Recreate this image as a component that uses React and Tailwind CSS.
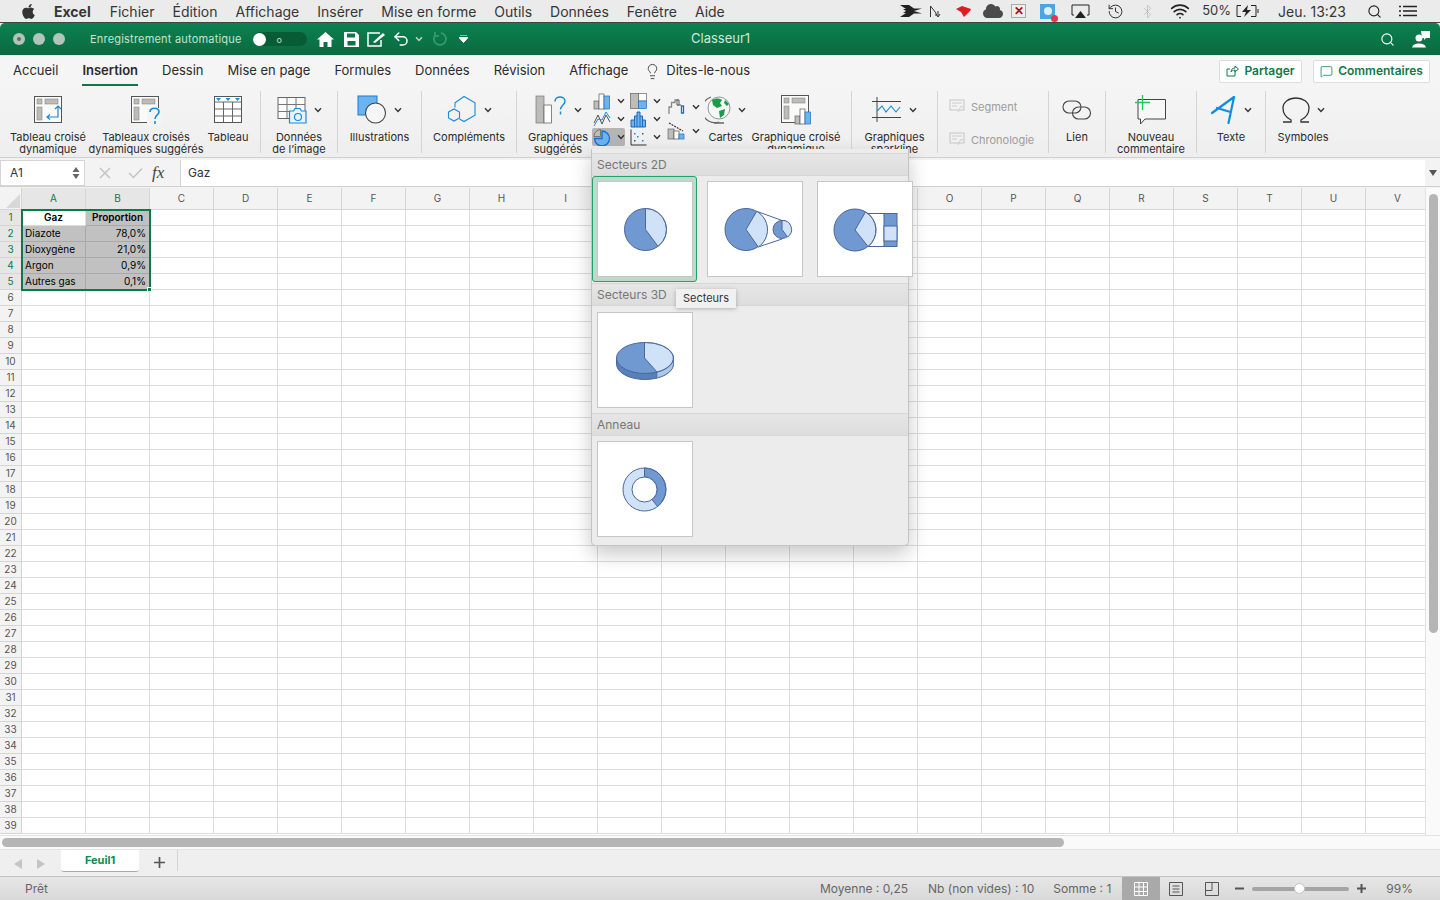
import React from 'react';
import { FaApple, FaCloud } from 'react-icons/fa';
import { Search, Undo2, Lightbulb, MessageSquare, Bluetooth, History, Wifi } from 'lucide-react';

const COLS = 'ABCDEFGHIJKLMNOPQRSTUV'.split('');
const ROWS = Array.from({ length: 39 }, (_, i) => i + 1);
const MENUS = ['Fichier', 'Édition', 'Affichage', 'Insérer', 'Mise en forme', 'Outils', 'Données', 'Fenêtre', 'Aide'];
const TABS = ['Accueil', 'Insertion', 'Dessin', 'Mise en page', 'Formules', 'Données', 'Révision', 'Affichage'];

const DATA = [
  ['Gaz', 'Proportion'],
  ['Diazote', '78,0%'],
  ['Dioxygène', '21,0%'],
  ['Argon', '0,9%'],
  ['Autres gas', '0,1%'],
];

const DARK = '#7098d1';
const LIGHT = '#cfe2f8';
const EDGE = '#4b6699';

const Chev = ({ className = '' }) => (
  <svg width="8" height="6" viewBox="0 0 8 6" className={`shrink-0 ${className}`}>
    <path d="M1 1.2 L4 4.4 L7 1.2" fill="none" stroke="#333" strokeWidth="1.4" />
  </svg>
);

const Sep = () => <div className="w-px h-[62px] mt-[2px] bg-[#d4d4d4] shrink-0" />;

// ── Ribbon icons ──────────────────────────────
const PivotIcon = () => (
  <svg width="30" height="30" viewBox="0 0 30 30">
    <rect x="1.5" y="1.5" width="27" height="26" fill="#fafafa" stroke="#555" />
    <rect x="4" y="4" width="5" height="5" fill="#bcbcb8" stroke="#777" strokeWidth=".5" />
    <rect x="12" y="4" width="13" height="5" fill="#bcbcb8" stroke="#777" strokeWidth=".5" />
    <rect x="4" y="12" width="5" height="13" fill="#bcbcb8" stroke="#777" strokeWidth=".5" />
    <path d="M25 12 v10 h-10 M22 14 l3-3 3 3 M17 19.500 l-3 2.500 3 2.500" fill="none" stroke="#1b8ad8" strokeWidth="1.200" />
  </svg>
);

const SuggestIcon = () => (
  <svg width="32" height="30" viewBox="0 0 32 30">
    <rect x="1.500" y="1.500" width="27" height="26" fill="#fafafa" stroke="#555" />
    <rect x="4" y="4" width="5" height="5" fill="#bcbcb8" stroke="#777" strokeWidth=".5" />
    <rect x="12" y="4" width="13" height="5" fill="#bcbcb8" stroke="#777" strokeWidth=".5" />
    <rect x="4" y="12" width="5" height="13" fill="#bcbcb8" stroke="#777" strokeWidth=".5" />
    <rect x="17" y="13" width="14" height="17" fill="#f4f4f4" />
    <path d="M20 17 c0-5 9-5 9 0 c0 3-4 3-4 7 M25 26 v3" fill="none" stroke="#1b8ad8" strokeWidth="1.600" />
  </svg>
);

const TableIcon = () => (
  <svg width="30" height="30" viewBox="0 0 30 30">
    <rect x="1.500" y="1.500" width="27" height="26" fill="#fff" stroke="#555" />
    <path d="M1.500 7 H28.500 M1.500 14 H28.500 M1.500 21 H28.500 M10.500 7 V27 M19.500 7 V27" stroke="#666" fill="none" />
    <path d="M3 3 h5 l-2.500 3z M12.500 3 h5 l-2.500 3z M22 3 h5 l-2.500 3z" fill="#1b8ad8" />
  </svg>
);

const PictureDataIcon = () => (
  <svg width="30" height="28" viewBox="0 0 30 28">
    <rect x="1" y="1.500" width="27" height="21" fill="#fbfbfb" stroke="#666" />
    <path d="M1 8.500 H28 M1 15.500 H28 M10 1.500 V22.500 M19 1.500 V22.500" stroke="#777" fill="none" />
    <path d="M12.500 15 h4 l1.500-2.500 h5 l1.500 2.500 h4.500 v12 h-16.500z" fill="#e8f3fb" stroke="#1b8ad8" strokeWidth="1.200" />
    <circle cx="21" cy="21" r="3.500" fill="none" stroke="#1b8ad8" strokeWidth="1.200" />
  </svg>
);

const ShapesIcon = () => (
  <svg width="30" height="30" viewBox="0 0 30 30">
    <rect x="1" y="1" width="19" height="19" fill="#6db3f0" stroke="#1b7ad0" />
    <circle cx="18.500" cy="18" r="10" fill="#f6f6f6" stroke="#444" strokeWidth="1.100" />
  </svg>
);

const AddinIcon = () => (
  <svg width="30" height="30" viewBox="0 0 30 30">
    <path d="M16.500 1.500 L27.500 7.800 V20 L16.500 26.500 L9.500 22.300 V14 L5 11.500 V7.800z" fill="none" />
    <path d="M8 12.500 V7.700 L17 1.500 L28 7.700 V20.300 L17 26.500 L12.500 24" fill="none" stroke="#1b8ad8" strokeWidth="1.100" />
    <path d="M1.500 17 L7 14 L12.500 17 V23 L7 26 L1.500 23z" fill="none" stroke="#1b8ad8" strokeWidth="1.100" />
  </svg>
);

const ChartSuggestIcon = () => (
  <svg width="32" height="30" viewBox="0 0 32 30">
    <rect x="1" y="1" width="8" height="27" fill="#bcbcb8" stroke="#777" strokeWidth=".7" />
    <rect x="9" y="10" width="7.500" height="18" fill="#fff" stroke="#555" strokeWidth=".7" />
    <path d="M20 6.500 c0-6 10-6 10 0 c0 3.500-4.500 3.500-4.500 8 M25.500 16.500 v3" fill="none" stroke="#1b8ad8" strokeWidth="1.500" />
  </svg>
);

const MiniBars = () => (
  <svg width="18" height="17" viewBox="0 0 18 17">
    <rect x="1" y="8" width="5" height="8" fill="#bcbcb8" stroke="#666" strokeWidth=".7" />
    <rect x="6" y="1" width="5" height="15" fill="#fff" stroke="#555" strokeWidth=".7" />
    <rect x="11" y="3" width="5.500" height="13" fill="#6db3f0" stroke="#1b6fc0" strokeWidth=".7" />
  </svg>
);

const MiniLines = () => (
  <svg width="18" height="17" viewBox="0 0 18 17">
    <path d="M1 12 L5 4 L9 13 L13 4 L17 11" fill="none" stroke="#555" strokeWidth="1" />
    <path d="M1 15 L5 8 L9 9 L13 1 L17 7" fill="none" stroke="#1b8ad8" strokeWidth="1" />
  </svg>
);

const MiniPie = () => (
  <svg width="18" height="18" viewBox="0 0 18 18">
    <path d="M7.500 1.500 A7 7 0 0 0 1 8.500 H7.500z" fill="#bcbcb8" stroke="#666" strokeWidth=".8" />
    <path d="M9 3 A7.500 7.500 0 1 1 1.500 10.500 H9z" fill="#6db3f0" stroke="#0f73d0" strokeWidth="1.300" />
  </svg>
);

const MiniTreemap = () => (
  <svg width="17" height="17" viewBox="0 0 17 17">
    <rect x=".5" y=".5" width="8" height="15" fill="#bcbcb8" stroke="#666" strokeWidth=".7" />
    <rect x="8.500" y=".5" width="8" height="7.500" fill="#fff" stroke="#666" strokeWidth=".7" />
    <rect x="8.500" y="8" width="8" height="7.500" fill="#6db3f0" stroke="#1b6fc0" strokeWidth=".7" />
  </svg>
);

const MiniHisto = () => (
  <svg width="17" height="17" viewBox="0 0 17 17">
    <path d="M1 16 V9 H4.500 V5 H7 V1 H10 V5 H12.500 V9 H15.500 V16z" fill="#6db3f0" stroke="#0f5fb0" strokeWidth=".9" />
    <path d="M4.500 9 V16 M7 5 V16 M10 5 V16 M12.500 9 V16" stroke="#0f5fb0" strokeWidth=".8" />
  </svg>
);

const MiniScatter = () => (
  <svg width="17" height="17" viewBox="0 0 17 17">
    <path d="M1 .5 V16 H16.500" fill="none" stroke="#333" />
    <g fill="#555"><rect x="4" y="11" width="1.500" height="1.500" /><rect x="12" y="4" width="1.500" height="1.500" /></g>
    <g fill="#1b8ad8"><rect x="4" y="4" width="1.500" height="1.500" /><rect x="7" y="7" width="1.500" height="1.500" /><rect x="12" y="11" width="1.500" height="1.500" /></g>
  </svg>
);

const MiniWaterfall = () => (
  <svg width="17" height="17" viewBox="0 0 17 17">
    <path d="M1 15 V8 H3.500 V3.500 H7 V1 H10 V6 H13" fill="none" stroke="#888" strokeWidth="1.300" />
    <path d="M13.500 7 H15.500 V14 H13.500z" fill="#fff" stroke="#1b6fc0" strokeWidth="1.300" />
    <path d="M9 1 V6 H11 V1z" fill="#fff" stroke="#555" strokeWidth="1" />
  </svg>
);

const MiniFunnel = () => (
  <svg width="18" height="18" viewBox="0 0 18 18">
    <rect x="1" y="7" width="6" height="10" fill="#bcbcb8" stroke="#666" strokeWidth=".7" />
    <rect x="7" y="9" width="5" height="8" fill="#fff" stroke="#555" strokeWidth=".7" />
    <rect x="12" y="12" width="5" height="5" fill="#6db3f0" stroke="#1b6fc0" strokeWidth=".7" />
    <path d="M2 1 L16 9" stroke="#333" strokeWidth="1.300" strokeDasharray="2 1" />
  </svg>
);

const GlobeIcon = () => (
  <svg width="26" height="30" viewBox="0 0 26 30">
    <path d="M6 2 A13 13 0 0 0 14 27" fill="none" stroke="#666" strokeWidth="1.200" />
    <path d="M9 28 H19" stroke="#666" strokeWidth="1.500" />
    <circle cx="14" cy="13" r="11" fill="#f4f9f6" stroke="#555" strokeWidth=".6" />
    <path d="M7 5 C10 3 15 3 17 5 L15 8 L17 11 L12 13 L8 10z M14 16 L20 14 L19 20 L15 23z M20 5 L24 9 L22 11 L19 8z" fill="#1d9b4c" />
  </svg>
);

const PivotChartIcon = () => (
  <svg width="32" height="32" viewBox="0 0 32 32">
    <rect x="1.500" y="1.500" width="27" height="27" fill="#fafafa" stroke="#555" />
    <rect x="4" y="4" width="5" height="5" fill="#bcbcb8" stroke="#777" strokeWidth=".5" />
    <rect x="12" y="4" width="13" height="5" fill="#bcbcb8" stroke="#777" strokeWidth=".5" />
    <rect x="4" y="12" width="5" height="13" fill="#bcbcb8" stroke="#777" strokeWidth=".5" />
    <rect x="15" y="22" width="5" height="8" fill="#bcbcb8" stroke="#666" strokeWidth=".7" />
    <rect x="20" y="15" width="5" height="15" fill="#fff" stroke="#555" strokeWidth=".7" />
    <rect x="25" y="18" width="5.500" height="12" fill="#6db3f0" stroke="#1b6fc0" strokeWidth=".7" />
  </svg>
);

const SparkIcon = () => (
  <svg width="30" height="26" viewBox="0 0 30 26">
    <path d="M5 0 V25 M0 4.500 H29 M0 20.500 H29" stroke="#444" fill="none" />
    <path d="M5 14 L10 9 L14 15 L19 9 L24 15 L28 10" stroke="#1b8ad8" fill="none" strokeWidth="1.100" />
  </svg>
);

const SlicerIcon = () => (
  <svg width="16" height="16" viewBox="0 0 16 16" className="opacity-50">
    <rect x="1" y="1" width="14" height="10" fill="#f4f4f4" stroke="#999" />
    <path d="M3 4 H13 M3 7 H8 M9 13 l3-6 3 2" fill="none" stroke="#aaa" />
  </svg>
);

const LinkIcon = () => (
  <svg width="30" height="24" viewBox="0 0 30 24">
    <rect x="1" y="3" width="18" height="12" rx="6" fill="none" stroke="#444" strokeWidth="1.100" />
    <rect x="10.500" y="9" width="18" height="12" rx="6" fill="none" stroke="#444" strokeWidth="1.100" />
  </svg>
);

const CommentIcon = () => (
  <svg width="32" height="30" viewBox="0 0 32 30">
    <path d="M3 4.500 H30.500 V24 H10 L5.500 29 V24 H3z" fill="#f7f7f7" stroke="#444" strokeWidth="1" />
    <path d="M0 7.500 H15 M7.500 0 V15" stroke="#22c55e" strokeWidth="1.300" />
  </svg>
);

const TextIcon = () => (
  <svg width="26" height="28" viewBox="0 0 26 28">
    <path d="M1 17 L23 1 L17.500 27 M6 12 L19.500 16" fill="none" stroke="#0f8ee0" strokeWidth="2.200" strokeLinecap="round" strokeLinejoin="round" />
  </svg>
);

const OmegaIcon = () => (
  <svg width="28" height="26" viewBox="0 0 28 26">
    <path d="M1 25 H9 V23 C3 20 1 15 1 11 C1 5 7 1 14 1 C21 1 27 5 27 11 C27 15 25 20 19 23 V25 H27" fill="none" stroke="#333" strokeWidth="1.300" />
  </svg>
);

const RibbonItem = ({ width, icon, chevron, lines, pad = '' }) => (
  <div className={`shrink-0 flex flex-col items-center ${width} ${pad}`}>
    <div className="h-[38px] flex items-center justify-center gap-[7px] mt-[2px]">
      {icon}
      {chevron && <Chev />}
    </div>
    <div className="mt-[2px] text-center text-[11px] leading-[12px] text-[#2b2b2b] whitespace-nowrap">
      {lines.map(l => <div key={l}>{l}</div>)}
    </div>
  </div>
);

const MiniCell = ({ icon, width, active }) => (
  <div className={`flex items-center h-[18px] rounded-[2px] pl-[1px] ${width} ${active ? 'bg-[#b5b5b5]' : ''}`}>
    <div className="w-[20px] flex justify-center">{icon}</div>
    <Chev className="ml-[6px]" />
  </div>
);

// ── Top bars ──────────────────────────────────
const MenuBar = () => (
  <div className="h-[22px] bg-[#ebebeb] flex items-center text-[14px] text-[#363636] shrink-0">
    <FaApple className="ml-[20px] text-[17px] text-[#333]" />
    <span className="ml-[17px] font-bold">Excel</span>
    <div className="ml-[19px] flex gap-[18px]">
      {MENUS.map(m => <span key={m}>{m}</span>)}
    </div>
    <div className="ml-auto flex items-center h-full">
      <svg width="22" height="12" viewBox="0 0 22 12" className="mr-[7px]">
        <path d="M0 0 H9 L14 3.500 H22 L14 6 L22 8.500 H14 L9 12 H0 L6 8 H3 L6 6 L3 4 H6z" fill="#222" />
      </svg>
      <svg width="13" height="15" viewBox="0 0 13 15" className="mr-[14px]">
        <path d="M1.500 2 V13 M1.500 2 L7 9 V12 M9 7 V12 M11 10 l-2 3 -2-3" stroke="#333" fill="none" />
      </svg>
      <svg width="16" height="13" viewBox="0 0 16 13" className="mr-[11px]">
        <path d="M0 4 L6 1 L15 4 L14 6 L8 12 L5 7z" fill="#e01b24" />
      </svg>
      <FaCloud className="text-[20px] text-[#4a4a4a] mr-[8px]" />
      <div className="w-[15px] h-[14px] border border-[#aaa] bg-[#eee] flex items-center justify-center text-[12px] leading-none font-bold text-[#a11] mr-[14px]">✕</div>
      <div className="relative w-[15px] h-[15px] bg-[#4aa5e0] mr-[16px] flex items-center justify-center">
        <div className="w-[8px] h-[8px] rounded-full bg-[#dfeffa]" />
        <div className="absolute -right-[3px] -bottom-[3px] w-[7px] h-[7px] rounded-full bg-[#e0384c]" />
      </div>
      <svg width="19" height="15" viewBox="0 0 19 15" className="mr-[17px]">
        <path d="M3 11 H1 V1 H18 V11 H16" fill="none" stroke="#222" />
        <path d="M9.500 7 L15 14 H4z" fill="#222" />
      </svg>
      <History size={17} strokeWidth={1.400} className="text-[#333] mr-[16px]" />
      <Bluetooth size={15} strokeWidth={1.300} className="text-[#bbb] mr-[15px]" />
      <Wifi size={20} strokeWidth={2} className="text-[#222] mr-[12px]" />
      <span className="text-[13px]">50%</span>
      <svg width="24" height="12" viewBox="0 0 24 12" className="ml-[5px]">
        <path d="M5 .5 H1 V11.500 H5 M15 .5 H20 V11.500 H15 M22 4 V8" fill="none" stroke="#222" />
        <path d="M12 0 L6 7 H10 L8 12 L15 5 H11z" fill="#222" />
      </svg>
      <span className="ml-[18px]">Jeu. 13:23</span>
      <Search size={15} strokeWidth={1.800} className="ml-[21px] text-[#222]" />
      <svg width="18" height="12" viewBox="0 0 18 12" className="ml-[17px] mr-[23px]">
        <path d="M4 1.500 H18 M4 6 H18 M4 10.500 H18 M0 1.500 H2 M0 6 H2 M0 10.500 H2" stroke="#222" strokeWidth="1.400" />
      </svg>
    </div>
  </div>
);

const TitleBar = () => (
  <div className="shrink-0 border-t border-[#444] bg-[#ebebeb]">
    <div className="relative h-[32px] rounded-t-[5px] bg-gradient-to-b from-[#0b8150] to-[#0a6b3f] flex items-center">
      <div className="ml-[13px] flex gap-[8px]">
        {[0, 1, 2].map(i => (
          <div key={i} className="w-[12px] h-[12px] rounded-full bg-[#b4c4bc] flex items-center justify-center">
            {i === 0 && <div className="w-[4px] h-[4px] rounded-full bg-[#5d6f66]" />}
          </div>
        ))}
      </div>
      <span className="ml-[25px] text-[11px] tracking-[.2px] text-[#c3e2d2]">Enregistrement automatique</span>
      <div className="ml-[11px] w-[54px] h-[14px] rounded-full bg-[#075c36] flex items-center">
        <div className="w-[13px] h-[13px] rounded-full bg-white" />
        <span className="ml-[11px] text-[9px] leading-none text-[#c3e2d2]">o</span>
      </div>
      <svg width="17" height="15" viewBox="0 0 17 15" className="ml-[10px]">
        <path d="M8.500 0 L0 7.500 H2.500 V15 H6.500 V10 H10.500 V15 H14.500 V7.500 H17z" fill="#fff" />
      </svg>
      <svg width="15" height="15" viewBox="0 0 15 15" className="ml-[10px]">
        <path d="M0 0 H12 L15 3 V15 H0z M3 1.500 V5.500 H11 V1.500z M3.500 9 V13.500 H11.500 V9z" fill="#fff" fillRule="evenodd" />
      </svg>
      <svg width="19" height="15" viewBox="0 0 19 15" className="ml-[8px]">
        <path d="M13 1 H1 V14 H14 V8" fill="none" stroke="#fff" strokeWidth="1.500" />
        <path d="M6 10 L16 1 L18 3 L8 11z" fill="#fff" />
      </svg>
      <Undo2 size={18} strokeWidth={2} className="ml-[6px] text-white" />
      <Chev className="ml-[5px] invert" />
      <svg width="15" height="16" viewBox="0 0 15 16" className="ml-[9px]">
        <path d="M9 2 A6 6 0 1 1 3 4.500 M3 1 V5 H7" fill="none" stroke="#3f9c72" strokeWidth="1.600" />
      </svg>
      <svg width="9" height="8" viewBox="0 0 9 8" className="ml-[12px]">
        <path d="M1 0 H8 M0 2.500 H9 L4.500 7.500z" stroke="#fff" fill="#fff" />
      </svg>
      <span className="absolute left-[691px] text-[13px] text-[#cfe8db]">Classeur1</span>
      <div className="ml-auto flex items-center">
        <Search size={15} strokeWidth={1.800} className="text-white mr-[17px]" />
        <svg width="18" height="17" viewBox="0 0 18 17" className="mr-[10px]">
          <circle cx="7" cy="7" r="3.500" fill="#fff" />
          <path d="M0 16.500 C1 11 13 11 14 16.500z" fill="#fff" />
          <path d="M9 0 H18 V7 H14 L12 9 V7 H10z" fill="#fff" />
        </svg>
      </div>
    </div>
  </div>
);

const TabBar = () => (
  <div className="h-[32px] bg-[#f5f5f5] flex items-center shrink-0 text-[13px] text-[#2b2b2b]">
    <div className="ml-[13px] flex gap-[24px]">
      {TABS.map(t => (
        <div key={t} className={`relative ${t === 'Insertion' ? 'font-semibold' : ''}`}>
          {t}
          {t === 'Insertion' && <div className="absolute left-0 right-0 top-[23px] h-[2px] bg-[#0a7a4a]" />}
        </div>
      ))}
    </div>
    <Lightbulb size={17} strokeWidth={1.200} className="ml-[16px] text-[#333]" />
    <span className="ml-[5px]">Dites-le-nous</span>
    <div className="ml-auto flex gap-[11px] mr-[10px] text-[#0d7a4c] font-semibold text-[12px]">
      <div className="w-[83px] h-[23px] bg-white border border-[#ddd] rounded-[2px] flex items-center justify-center gap-[5px]">
        <svg width="13" height="12" viewBox="0 0 13 12">
          <path d="M9 5.500 V11 H1 V4 H4 M5 7 C5 4 7 3 9 3 V1 L12.500 4 L9 7 V5 C7 5 6 6 5 7z" fill="none" stroke="#0d7a4c" />
        </svg>
        Partager
      </div>
      <div className="w-[117px] h-[23px] bg-white border border-[#ddd] rounded-[2px] flex items-center justify-center gap-[5px]">
        <MessageSquare size={13} strokeWidth={1.400} />
        Commentaires
      </div>
    </div>
  </div>
);

const Ribbon = () => (
  <div className="h-[71px] bg-gradient-to-b from-[#f5f5f5] to-[#eeeeee] border-b border-[#cfcfcf] flex shrink-0 pt-[2px]">
    <RibbonItem width="w-[96px]" icon={<PivotIcon />} lines={['Tableau croisé', 'dynamique']} />
    <RibbonItem width="w-[100px]" icon={<SuggestIcon />} lines={['Tableaux croisés', 'dynamiques suggérés']} />
    <RibbonItem width="w-[64px]" icon={<TableIcon />} lines={['Tableau']} />
    <Sep />
    <RibbonItem width="w-[76px]" icon={<PictureDataIcon />} chevron lines={['Données', 'de l’image']} />
    <Sep />
    <RibbonItem width="w-[83px]" icon={<ShapesIcon />} chevron lines={['Illustrations']} />
    <Sep />
    <RibbonItem width="w-[94px]" icon={<AddinIcon />} chevron lines={['Compléments']} />
    <Sep />
    <RibbonItem width="w-[75px]" pad="pl-[7px]" icon={<ChartSuggestIcon />} chevron lines={['Graphiques', 'suggérés']} />
    <div className="w-[108px] shrink-0 grid grid-cols-[36px_37px_35px] grid-rows-[18px_18px_18px] mt-[3px]">
      <MiniCell icon={<MiniBars />} width="w-[33px]" />
      <MiniCell icon={<MiniTreemap />} width="w-[33px]" />
      <div className="row-span-3 flex flex-col justify-center gap-[6px] pl-[1px]">
        <div className="flex items-center"><div className="w-[20px] flex justify-center"><MiniWaterfall /></div><Chev className="ml-[6px]" /></div>
        <div className="flex items-center"><div className="w-[20px] flex justify-center"><MiniFunnel /></div><Chev className="ml-[6px]" /></div>
      </div>
      <MiniCell icon={<MiniLines />} width="w-[33px]" />
      <MiniCell icon={<MiniHisto />} width="w-[33px]" />
      <MiniCell icon={<MiniPie />} width="w-[33px]" active />
      <MiniCell icon={<MiniScatter />} width="w-[33px]" />
    </div>
    <RibbonItem width="w-[51px]" icon={<GlobeIcon />} chevron lines={['Cartes']} />
    <RibbonItem width="w-[90px]" icon={<PivotChartIcon />} lines={['Graphique croisé', 'dynamique']} />
    <div className="w-[10px] shrink-0" />
    <Sep />
    <RibbonItem width="w-[85px]" icon={<SparkIcon />} chevron lines={['Graphiques', 'sparkline']} />
    <Sep />
    <div className="w-[110px] shrink-0 text-[11px] text-[#9c9c9c] flex flex-col gap-[16px] pl-[11px] pt-[10px]">
      <div className="flex items-center gap-[6px]"><SlicerIcon />Segment</div>
      <div className="flex items-center gap-[6px]"><SlicerIcon />Chronologie</div>
    </div>
    <Sep />
    <RibbonItem width="w-[56px]" icon={<LinkIcon />} lines={['Lien']} />
    <Sep />
    <RibbonItem width="w-[90px]" icon={<CommentIcon />} lines={['Nouveau', 'commentaire']} />
    <Sep />
    <RibbonItem width="w-[68px]" icon={<TextIcon />} chevron lines={['Texte']} />
    <Sep />
    <RibbonItem width="w-[74px]" icon={<OmegaIcon />} chevron lines={['Symboles']} />
  </div>
);

const FormulaBar = () => (
  <div className="h-[29px] bg-[#f3f3f3] flex items-stretch shrink-0 border-b border-[#d0d0d0] pt-[2px]">
    <div className="w-[85px] bg-white border border-[#d5d5d5] flex items-center pl-[9px] text-[12px] text-[#333] relative">
      A1
      <svg width="8" height="14" viewBox="0 0 8 14" className="absolute right-[4px]">
        <path d="M4 1 L7.500 6 H.5z M4 13 L7.500 8 H.5z" fill="#666" />
      </svg>
    </div>
    <div className="w-[95px] flex items-center text-[#c4c4c4]">
      <svg width="12" height="12" viewBox="0 0 12 12" className="ml-[14px]"><path d="M1 1 L11 11 M11 1 L1 11" stroke="#c4c4c4" strokeWidth="1.500" /></svg>
      <svg width="15" height="12" viewBox="0 0 15 12" className="ml-[17px]"><path d="M1 6 L5.500 10.500 L14 1.500" fill="none" stroke="#c4c4c4" strokeWidth="1.500" /></svg>
      <span className="ml-[9px] font-['Liberation_Serif',serif] italic text-[17px] text-[#444]">fx</span>
    </div>
    <div className="flex-1 bg-white border-l border-[#d5d5d5] pl-[7px] flex items-center text-[12px] text-[#333]">Gaz</div>
    <div className="w-[15px] flex items-center justify-center">
      <svg width="8" height="6" viewBox="0 0 8 6"><path d="M0 0 H8 L4 6z" fill="#555" /></svg>
    </div>
  </div>
);

// ── Sheet ─────────────────────────────────────
const Sheet = () => (
  <div className="h-[647px] flex shrink-0 bg-white mt-[1px]">
    <div className="relative flex-1 overflow-hidden">
      <div className="flex h-[22px]">
        <div className="w-[22px] shrink-0 bg-[#f3f3f3] border-r border-b border-[#d5d5d5] relative overflow-hidden">
          <svg width="22" height="22" viewBox="0 0 22 22" className="absolute inset-0"><path d="M20 6 V20 H6z" fill="#d8d8d8" /></svg>
        </div>
        {COLS.map((c, i) => (
          <div key={c} className={`w-[64px] shrink-0 border-r border-b border-[#d5d5d5] flex items-center justify-center text-[10px] ${i < 2 ? 'bg-[#e6e6e6] text-[#0b7a4b]' : 'bg-[#f3f3f3] text-[#555]'}`}>{c}</div>
        ))}
      </div>
      {ROWS.map(r => (
        <div key={r} className="flex h-[16px]">
          <div className={`w-[22px] shrink-0 border-r border-b border-[#d5d5d5] flex items-center justify-center text-[10px] ${r <= 5 ? 'bg-[#e6e6e6] text-[#0b7a4b]' : 'bg-[#f3f3f3] text-[#555]'}`}>{r}</div>
          {COLS.map((c, i) => {
            const val = r <= 5 && i < 2 ? DATA[r - 1][i] : null;
            const head = r === 1;
            const fill = val !== null && !(r === 1 && i === 0);
            return (
              <div
                key={c}
                className={`w-[64px] shrink-0 border-r border-b text-[10px] leading-[15px] text-black px-[3px] whitespace-nowrap ${fill ? 'bg-[#c1c1c1] border-[#a8a8a8]' : 'border-[#dcdcdc]'} ${head && val ? 'font-semibold text-center' : ''} ${!head && i === 1 && val ? 'text-right' : ''}`}
              >
                {val}
              </div>
            );
          })}
        </div>
      ))}
      <div className="absolute left-[21px] top-[21px] w-[130px] h-[82px] border-2 border-[#0a7a4a]">
        <div className="absolute -right-[3px] -bottom-[3px] w-[5px] h-[5px] bg-[#0a7a4a] border border-white" />
      </div>
    </div>
    <div className="w-[15px] shrink-0 bg-[#fafafa] border-l border-[#e2e2e2] pt-[6px] pl-[3px]">
      <div className="w-[9px] h-[439px] rounded-full bg-[#b5b5b5]" />
    </div>
  </div>
);

const SheetBottom = () => (
  <>
    <div className="h-[15px] bg-[#fafafa] border-t border-b border-[#e2e2e2] shrink-0 flex items-center pl-[2px]">
      <div className="w-[1062px] h-[9px] rounded-full bg-[#b5b5b5]" />
    </div>
    <div className="h-[27px] bg-[#efefef] border-b border-[#c2c2c2] shrink-0 flex items-start">
      <svg width="8" height="10" viewBox="0 0 8 10" className="ml-[14px] mt-[9px]"><path d="M8 0 V10 L0 5z" fill="#c4c4c4" /></svg>
      <svg width="8" height="10" viewBox="0 0 8 10" className="ml-[15px] mt-[9px]"><path d="M0 0 V10 L8 5z" fill="#c4c4c4" /></svg>
      <div className="ml-[16px] w-[78px] h-[22px] bg-white rounded-b-[3px] border-b border-[#aaa] flex items-center justify-center text-[11px] font-bold text-[#0d8a55]">Feuil1</div>
      <svg width="11" height="11" viewBox="0 0 11 11" className="ml-[15px] mt-[7px]"><path d="M5.500 0 V11 M0 5.500 H11" stroke="#555" strokeWidth="1.700" /></svg>
      <div className="ml-[12px] w-px h-[21px] bg-[#d5d5d5]" />
    </div>
  </>
);

const StatusBar = () => (
  <div className="h-[23px] bg-gradient-to-b from-[#e6e6e6] to-[#d9d9d9] shrink-0 flex items-center text-[12px] text-[#666]">
    <span className="ml-[25px]">Prêt</span>
    <span className="ml-auto">Moyenne : 0,25</span>
    <span className="ml-[20px]">Nb (non vides) : 10</span>
    <span className="ml-[19px]">Somme : 1</span>
    <div className="ml-[11px] w-[38px] h-full bg-[#a9a9a9] flex items-center justify-center">
      <svg width="14" height="14" viewBox="0 0 14 14"><path d="M.5 .5 H13.500 V13.500 H.5z M.5 5 H13.500 M.5 9.500 H13.500 M5 .5 V13.500 M9.500 .5 V13.500" fill="none" stroke="#fff" /></svg>
    </div>
    <svg width="14" height="14" viewBox="0 0 14 14" className="ml-[9px]"><path d="M.5 .5 H13.500 V13.500 H.5z M3.500 4 H10.500 M3.500 7 H10.500 M3.500 10 H10.500" fill="none" stroke="#555" /></svg>
    <svg width="14" height="14" viewBox="0 0 14 14" className="ml-[22px]"><path d="M.5 .5 H13.500 V13.500 H.5z M7 .5 V8.500 H.5" fill="none" stroke="#555" /></svg>
    <svg width="9" height="3" viewBox="0 0 9 3" className="ml-[16px]"><path d="M0 1.500 H9" stroke="#555" strokeWidth="2" /></svg>
    <div className="relative ml-[8px] w-[97px] h-[4px] rounded-full bg-[#a5a5a5] flex items-center">
      <div className="absolute left-[42px] w-[11px] h-[11px] rounded-full bg-white border border-[#c4c4c4]" />
    </div>
    <svg width="9" height="9" viewBox="0 0 9 9" className="ml-[8px]"><path d="M0 4.500 H9 M4.500 0 V9" stroke="#555" strokeWidth="2" /></svg>
    <span className="ml-[20px] mr-[27px]">99%</span>
  </div>
);

// ── Chart gallery pictures ────────────────────
const Pie2D = () => (
  <svg width="96" height="96" viewBox="0 0 96 96">
    <circle cx="47.500" cy="47.500" r="21" fill={DARK} stroke={EDGE} />
    <path d="M47.500 26.500 A21 21 0 0 1 60 64.300 L47.500 47.500z" fill={LIGHT} stroke={EDGE} />
  </svg>
);

const PieOfPie = () => (
  <svg width="96" height="96" viewBox="0 0 96 96">
    <path d="M48.700 29.300 L74 38.500 M50.300 65 L74 57" stroke={EDGE} fill="none" />
    <circle cx="38" cy="47.500" r="21" fill={DARK} stroke={EDGE} />
    <path d="M48.700 29.300 A21 21 0 0 1 50.300 65 L38 47.500z" fill={LIGHT} stroke={EDGE} />
    <circle cx="74" cy="47.500" r="9" fill={DARK} stroke={EDGE} />
    <path d="M74 38.500 A9 9 0 0 1 79.500 55 L74 47.500z" fill={LIGHT} stroke={EDGE} />
  </svg>
);

const BarOfPie = () => (
  <svg width="96" height="96" viewBox="0 0 96 96">
    <path d="M48 31.500 H66 M50 64.500 H66" stroke={EDGE} fill="none" />
    <circle cx="37" cy="48" r="21" fill={DARK} stroke={EDGE} />
    <path d="M47.500 30 A21 21 0 0 1 50 64.500 L37 48z" fill={LIGHT} stroke={EDGE} />
    <rect x="66" y="31.500" width="13" height="33" fill={DARK} stroke={EDGE} />
    <rect x="66" y="44" width="13" height="15" fill={LIGHT} stroke={EDGE} />
  </svg>
);

const Pie3D = () => (
  <svg width="96" height="96" viewBox="0 0 96 96">
    <path d="M18.500 45 V51 A28.500 15.500 0 0 0 75.500 51 V45z" fill="#5a80bb" stroke={EDGE} />
    <path d="M59 58.600 V65 A28.500 15.500 0 0 0 75.500 51 V45z" fill="#a9c8ea" stroke={EDGE} strokeWidth=".6" />
    <ellipse cx="47" cy="45" rx="28.500" ry="15.500" fill={DARK} stroke={EDGE} />
    <path d="M46.500 29.500 A28.500 15.500 0 0 1 59 59 L46.500 45z" fill={LIGHT} stroke={EDGE} />
  </svg>
);

const Doughnut = () => (
  <svg width="96" height="96" viewBox="0 0 96 96">
    <circle cx="46.500" cy="47.500" r="21.500" fill={LIGHT} stroke={EDGE} />
    <path d="M46.500 26 A21.500 21.500 0 0 1 59.500 64.500 L54 57.500 A12.500 12.500 0 0 0 46.500 35z" fill={DARK} stroke={EDGE} />
    <circle cx="46.500" cy="47.500" r="12.500" fill="#fff" stroke={EDGE} />
  </svg>
);

const Tile = ({ children, active }) => (
  <div className={`w-[105px] h-[106px] rounded-[3px] flex items-center justify-center shrink-0 ${active ? 'bg-[#bfd8cb] border border-[#21a366]' : ''}`}>
    <div className="w-[96px] h-[96px] bg-white border border-[#c6c6c6] overflow-hidden">{children}</div>
  </div>
);

const SectionHead = ({ children }) => (
  <div className="h-[23px] bg-gradient-to-b from-[#e6e6e6] to-[#dddddd] border-t border-b border-[#d6d6d6] flex items-center pl-[5px] text-[12px] text-[#777]">{children}</div>
);

const ChartGallery = () => (
  <div className="absolute left-[591px] top-[149px] w-[318px] h-[397px] bg-[#ececec] border-x border-b border-[#c4c4c4] rounded-b-[5px] shadow-[0_8px_20px_rgba(0,0,0,0.22)] pt-[4px] z-10">
    <SectionHead>Secteurs 2D</SectionHead>
    <div className="flex gap-[5px] pl-[0px] pt-[0px] h-[107px]">
      <Tile active><Pie2D /></Tile>
      <Tile><PieOfPie /></Tile>
      <Tile><BarOfPie /></Tile>
    </div>
    <SectionHead>Secteurs 3D</SectionHead>
    <div className="h-[107px] pl-[0px] pt-[1px]"><Tile><Pie3D /></Tile></div>
    <SectionHead>Anneau</SectionHead>
    <div className="pt-[0px]"><Tile><Doughnut /></Tile></div>
  </div>
);

const App = () => (
  <div className="relative w-[1440px] h-[900px] overflow-hidden flex flex-col bg-[#f3f3f3] font-['Inter',sans-serif]">
    <MenuBar />
    <TitleBar />
    <TabBar />
    <Ribbon />
    <FormulaBar />
    <Sheet />
    <SheetBottom />
    <StatusBar />
    <ChartGallery />
    <div className="absolute left-[676px] top-[289px] w-[60px] h-[19px] bg-[#f1f1f1] shadow-[0_1px_4px_rgba(0,0,0,0.25)] flex items-center justify-center text-[11px] text-[#333] z-20">Secteurs</div>
  </div>
);

export default App;
